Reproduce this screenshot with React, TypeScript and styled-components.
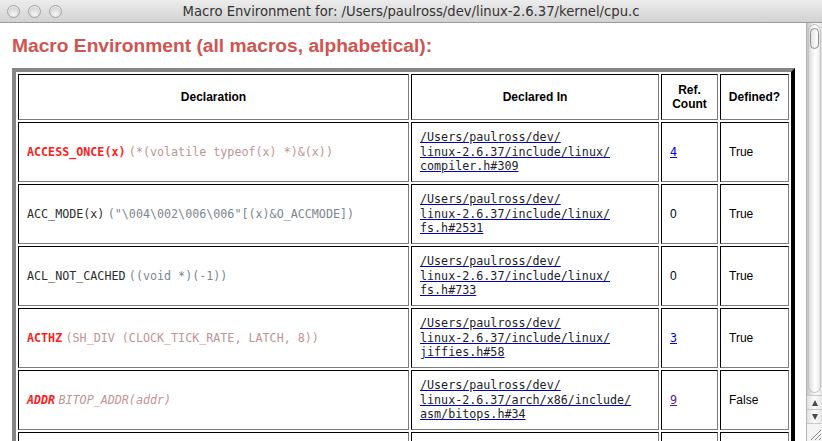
import React from "react";
import styled, { createGlobalStyle } from "styled-components";

const Global = createGlobalStyle`
  html, body { margin: 0; padding: 0; background: #fff; overflow: hidden; }
  body { width: 822px; height: 441px; }
`;

const SANS = `"Liberation Sans", Arial, Helvetica, sans-serif`;
const MONO = `"DejaVu Sans Mono", "Liberation Mono", monospace`;

const Window = styled.div`
  width: 822px;
  height: 441px;
  display: flex;
  flex-direction: column;
  overflow: hidden;
  background: #fff;
`;

const TitleBar = styled.div`
  flex: none;
  height: 23px;
  box-sizing: border-box;
  display: grid;
  grid-template-columns: 1fr auto 1fr;
  align-items: center;
  background: linear-gradient(#ececec, #d2d2d2);
  border-bottom: 1px solid #9a9a9a;
`;

const Lights = styled.div`
  display: flex;
  gap: 8px;
  padding-left: 7px;
`;

const Light = styled.span`
  width: 13px;
  height: 13px;
  border-radius: 50%;
  box-sizing: border-box;
  border: 1px solid #a2a2a2;
  background: radial-gradient(circle at 50% 75%, #f7f7f7 0%, #dedede 45%, #c4c4c4 100%);
  box-shadow: inset 0 1px 1px rgba(255, 255, 255, 0.8);
`;

const Title = styled.div`
  font-family: "DejaVu Sans", "Lucida Grande", sans-serif;
  font-size: 13.2px;
  color: #333;
  white-space: nowrap;
`;

const Main = styled.div`
  flex: 1;
  min-height: 0;
  display: flex;
`;

const Content = styled.div`
  flex: 1;
  min-width: 0;
  overflow: hidden;
  padding: 12px 0 0 12px;
`;

const Heading = styled.h2`
  margin: 0 0 11px;
  font-family: ${SANS};
  font-weight: bold;
  font-size: 19.2px;
  line-height: 22px;
  color: #d05450;
`;

const Table = styled.table`
  border-collapse: separate;
  border-spacing: 2px;
  border-style: solid;
  border-width: 4px;
  border-color: #868686 #000 #000 #868686;
  table-layout: fixed;
  width: 783px;
  box-sizing: border-box;
`;

const HeadCell = styled.th<{ $w: number }>`
  box-sizing: border-box;
  width: ${(p) => p.$w}px;
  height: 46px;
  padding: 0 4px;
  border: 1px solid;
  border-color: #000 #7c7c7c #7c7c7c #000;
  font-family: ${SANS};
  font-weight: bold;
  font-size: 12px;
  line-height: 14px;
  color: #000;
  text-align: center;
  vertical-align: middle;
`;

const Cell = styled.td<{ $mono?: boolean }>`
  box-sizing: border-box;
  height: 60px;
  padding: 0 8px;
  border: 1px solid;
  border-color: #000 #7c7c7c #7c7c7c #000;
  font-family: ${(p) => (p.$mono ? MONO : SANS)};
  font-size: ${(p) => (p.$mono ? "11.7px" : "12px")};
  line-height: 14.5px;
  color: #000;
  text-align: left;
  vertical-align: middle;
  white-space: nowrap;
  overflow: hidden;
`;

const MacroName = styled.span<{ $ref: boolean; $defined: boolean }>`
  font-family: ${MONO};
  font-size: 11.7px;
  font-weight: ${(p) => (p.$ref ? "bold" : "normal")};
  font-style: ${(p) => (p.$defined ? "normal" : "italic")};
  color: ${(p) => (p.$ref ? "#ff1c1c" : "#2e2e2e")};
`;

const MacroValue = styled.span<{ $ref: boolean; $defined: boolean }>`
  font-family: ${MONO};
  font-size: 11.7px;
  font-style: ${(p) => (p.$defined ? "normal" : "italic")};
  color: ${(p) => (p.$ref ? "#bf9494" : "#7b8690")};
`;

const PathLink = styled.a`
  color: #0000c8;
  text-decoration: underline;
  text-decoration-color: #0000c8;
  text-underline-offset: 1px;
`;

const PathText = styled.span`
  color: #1c1c2a;
`;

const RefLink = styled.a<{ $visited?: boolean }>`
  font-family: ${MONO};
  font-size: 11.7px;
  color: ${(p) => (p.$visited ? "#551a8b" : "#0000ee")};
  text-decoration: underline;
  text-underline-offset: 1px;
`;

const Scrollbar = styled.div`
  flex: none;
  width: 16px;
  box-sizing: border-box;
  border-left: 1px solid #b4b4b4;
  display: flex;
  flex-direction: column;
  background: linear-gradient(to right, #c6c6c6, #e6e6e6 30%, #fafafa 60%, #e2e2e2);
`;

const Track = styled.div`
  flex: 1;
  display: flex;
  padding: 1px 1px 2px 1px;
`;

const Thumb = styled.div`
  flex: 1;
  display: flex;
  flex-direction: column;
  align-items: center;
  border-radius: 7px;
  border: 1px solid #c2c2c2;
  background: linear-gradient(to right, #dadada, #f6f6f6 40%, #ffffff 60%, #e8e8e8);
`;

const ThumbCap = styled.span`
  margin-top: 3px;
  width: 9px;
  height: 21px;
  box-sizing: border-box;
  border: 1.5px solid #8e8e8e;
  border-radius: 5px;
  background: linear-gradient(to right, #e4e4e4, #fff);
`;

const ArrowButton = styled.div<{ $down?: boolean }>`
  flex: none;
  height: 13px;
  display: flex;
  align-items: center;
  justify-content: center;
  border-top: 1px solid #c8c8c8;
  background: linear-gradient(to right, #e0e0e0, #fbfbfb 50%, #e6e6e6);
  &::after {
    content: "";
    width: 0;
    height: 0;
    border-left: 3.5px solid transparent;
    border-right: 3.5px solid transparent;
    ${(p) =>
      p.$down ? "border-top: 6px solid #4a4a4a;" : "border-bottom: 6px solid #4a4a4a;"}
  }
`;

const Grip = styled.div`
  flex: none;
  height: 17px;
  border-top: 1px solid #c8c8c8;
  background: #f4f4f4;
  display: flex;
  align-items: flex-end;
  justify-content: flex-end;
`;

type Row = {
  name: string;
  value: string;
  path: string[];
  refs: number;
  visited?: boolean;
  defined: boolean;
};

const rows: Row[] = [
  {
    name: "ACCESS_ONCE(x)",
    value: "(*(volatile typeof(x) *)&(x))",
    path: ["/Users/paulross/dev/", "linux-2.6.37/include/linux/", "compiler.h#309"],
    refs: 4,
    defined: true,
  },
  {
    name: "ACC_MODE(x)",
    value: '("\\004\\002\\006\\006"[(x)&O_ACCMODE])',
    path: ["/Users/paulross/dev/", "linux-2.6.37/include/linux/", "fs.h#2531"],
    refs: 0,
    defined: true,
  },
  {
    name: "ACL_NOT_CACHED",
    value: "((void *)(-1))",
    path: ["/Users/paulross/dev/", "linux-2.6.37/include/linux/", "fs.h#733"],
    refs: 0,
    defined: true,
  },
  {
    name: "ACTHZ",
    value: "(SH_DIV (CLOCK_TICK_RATE, LATCH, 8))",
    path: ["/Users/paulross/dev/", "linux-2.6.37/include/linux/", "jiffies.h#58"],
    refs: 3,
    defined: true,
  },
  {
    name: "ADDR",
    value: "BITOP_ADDR(addr)",
    path: ["/Users/paulross/dev/", "linux-2.6.37/arch/x86/include/", "asm/bitops.h#34"],
    refs: 9,
    visited: true,
    defined: false,
  },
];

function MacroRow({ row }: { row: Row }) {
  const referenced = row.refs > 0;
  return (
    <tr>
      <Cell>
        <MacroName $ref={referenced} $defined={row.defined}>
          {row.name}
        </MacroName>{" "}
        <MacroValue $ref={referenced} $defined={row.defined}>
          {row.value}
        </MacroValue>
      </Cell>
      <Cell $mono>
        <PathLink href="#">
          {row.path.map((line, i) => (
            <React.Fragment key={i}>
              <PathText>{line}</PathText>
              {i < row.path.length - 1 && <br />}
            </React.Fragment>
          ))}
        </PathLink>
      </Cell>
      <Cell>
        {referenced ? (
          <RefLink href="#" $visited={row.visited}>
            {row.refs}
          </RefLink>
        ) : (
          row.refs
        )}
      </Cell>
      <Cell>{row.defined ? "True" : "False"}</Cell>
    </tr>
  );
}

export default function App() {
  return (
    <>
      <Global />
      <Window>
        <TitleBar>
          <Lights>
            <Light />
            <Light />
            <Light />
          </Lights>
          <Title>Macro Environment for: /Users/paulross/dev/linux-2.6.37/kernel/cpu.c</Title>
          <div />
        </TitleBar>
        <Main>
          <Content>
            <Heading>Macro Environment (all macros, alphabetical):</Heading>
            <Table>
              <thead>
                <tr>
                  <HeadCell $w={391}>Declaration</HeadCell>
                  <HeadCell $w={248}>Declared In</HeadCell>
                  <HeadCell $w={57}>
                    Ref.
                    <br />
                    Count
                  </HeadCell>
                  <HeadCell $w={69}>Defined?</HeadCell>
                </tr>
              </thead>
              <tbody>
                {rows.map((r) => (
                  <MacroRow key={r.name} row={r} />
                ))}
                <tr>
                  <Cell />
                  <Cell />
                  <Cell />
                  <Cell />
                </tr>
              </tbody>
            </Table>
          </Content>
          <Scrollbar>
            <Track>
              <Thumb>
                <ThumbCap />
              </Thumb>
            </Track>
            <ArrowButton />
            <ArrowButton $down />
            <Grip>
              <svg width="14" height="14" viewBox="0 0 14 14">
                <path d="M13 3 L3 13 M13 7 L7 13 M13 11 L11 13" stroke="#8a8a8a" strokeWidth="1" />
              </svg>
            </Grip>
          </Scrollbar>
        </Main>
      </Window>
    </>
  );
}
